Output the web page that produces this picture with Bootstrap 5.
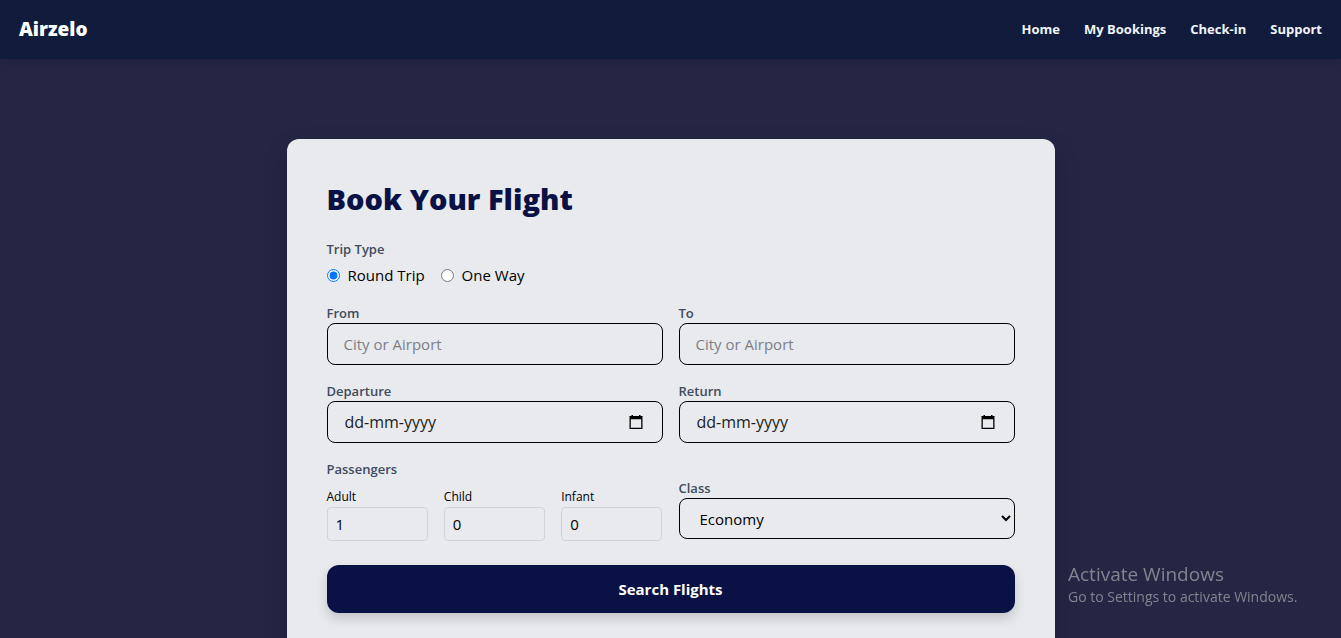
<!DOCTYPE html>
<html lang="en">
<head>
<meta charset="utf-8">
<meta name="viewport" content="width=device-width, initial-scale=1">
<title>Airzelo</title>
<link href="https://cdn.jsdelivr.net/npm/bootstrap@5.3.0/dist/css/bootstrap.min.css" rel="stylesheet">
<style>
  body { background: #242644; color: #000; font-family: "Segoe UI", "Open Sans", "Noto Sans", sans-serif; font-size: 15px; }
  .site-header { background: #111c3c; min-height: 59px; padding: 0 19px; box-shadow: 0 2px 10px rgba(0, 0, 0, .15); }
  .site-header .navbar-brand { color: #fff; font-size: 19px; font-weight: 800; }
  .site-header .nav-link { color: #f1f5f9; font-size: 13px; font-weight: 700; }
  .booking-wrap { padding: 80px 16px; }
  .booking { max-width: 768px; padding: 40px; background: #e8eaee; border-radius: 12px; box-shadow: 0 10px 24px rgba(0, 0, 0, .2); }
  .booking h1 { color: #0a1144; font-size: 29px; line-height: 40px; font-weight: 800; margin-bottom: 20px; }
  .field-label { display: block; color: #414b5d; font-size: 13px; line-height: 20px; font-weight: 600; margin: 0; }
  .count-label { display: block; font-size: 12px; line-height: 20px; }
  .trip-option { line-height: 24px; }
  .trip-option input { width: 13px; height: 13px; margin: 0; }
  .booking .form-control { color: #000; background: transparent; border: 1px solid #000; border-radius: 8px; height: 42px; padding: 8px 16px; font-size: 15px; line-height: 24px; }
  .booking .form-control::placeholder { color: #7d8087; }
  .booking .date-box { padding: 0 19px 0 17px; }
  .date-box input { background: transparent; border: 0; outline: 0; padding: 0; min-width: 0; font-size: 16px; line-height: 24px; }
  .date-box input::placeholder { color: #1c1d22; opacity: 1; }
  .date-box button { background: transparent; border: 0; padding: 0; }
  .booking .count-input { height: 34px; padding: 4px 8px; border-color: #d0d3d9; border-radius: 4px; }
  .class-field { padding-bottom: 2px; }
  .class-select { width: 100%; height: 41px; padding: 0 0 0 16px; color: #000; background: transparent; border: 1px solid #000; border-radius: 8px; }
  .booking .search-btn { height: 48px; margin-top: 24px; color: #fff; background: #0a1144; border: 0; border-radius: 12px; font-size: 15px; font-weight: 700; box-shadow: 0 6px 12px rgba(0, 0, 0, .16); }
  .os-notice { position: fixed; right: 37px; bottom: 31px; width: 236px; color: #83848f; pointer-events: none; font-size: 14px; line-height: 20px; }
  .os-notice strong { display: block; font-size: 19px; line-height: 26px; font-weight: 400; }
</style>
</head>
<body>
<header class="site-header navbar navbar-expand">
  <a class="navbar-brand p-0 m-0" href="#">Airzelo</a>
  <nav class="navbar-nav ms-auto gap-4">
    <a class="nav-link p-0" href="#">Home</a>
    <a class="nav-link p-0" href="#">My Bookings</a>
    <a class="nav-link p-0" href="#">Check-in</a>
    <a class="nav-link p-0" href="#">Support</a>
  </nav>
</header>
<main class="booking-wrap">
  <form class="booking mx-auto">
    <h1>Book Your Flight</h1>
    <fieldset class="mb-3">
      <legend class="field-label mb-1">Trip Type</legend>
      <div class="d-flex gap-3">
        <label class="trip-option d-flex align-items-center gap-2"><input type="radio" name="trip" checked>Round Trip</label>
        <label class="trip-option d-flex align-items-center gap-2"><input type="radio" name="trip">One Way</label>
      </div>
    </fieldset>
    <div class="row g-3">
      <div class="col-6">
        <label class="field-label" for="from">From</label>
        <input class="form-control" id="from" type="text" placeholder="City or Airport">
      </div>
      <div class="col-6">
        <label class="field-label" for="to">To</label>
        <input class="form-control" id="to" type="text" placeholder="City or Airport">
      </div>
      <div class="col-6">
        <label class="field-label" for="departure">Departure</label>
        <div class="form-control date-box d-flex align-items-center">
          <input class="flex-grow-1" id="departure" type="text" placeholder="dd-mm-yyyy">
          <button class="d-flex" type="button" aria-label="Pick departure date"><svg width="14" height="14" viewBox="0 0 14 14"><path fill-rule="evenodd" d="M2.500 0h1.500v1h6V0h1.500v1h2v13H.5V1h2zM1.800 4.300v8.400h10.400V4.300z"/></svg></button>
        </div>
      </div>
      <div class="col-6">
        <label class="field-label" for="return">Return</label>
        <div class="form-control date-box d-flex align-items-center">
          <input class="flex-grow-1" id="return" type="text" placeholder="dd-mm-yyyy">
          <button class="d-flex" type="button" aria-label="Pick return date"><svg width="14" height="14" viewBox="0 0 14 14"><path fill-rule="evenodd" d="M2.500 0h1.500v1h6V0h1.500v1h2v13H.5V1h2zM1.800 4.300v8.400h10.400V4.300z"/></svg></button>
        </div>
      </div>
      <fieldset class="col-6">
        <legend class="field-label mb-2">Passengers</legend>
        <div class="row gx-3">
          <div class="col-4">
            <label class="count-label" for="adult">Adult</label>
            <input class="form-control count-input" id="adult" type="number" min="1" value="1">
          </div>
          <div class="col-4">
            <label class="count-label" for="child">Child</label>
            <input class="form-control count-input" id="child" type="number" min="0" value="0">
          </div>
          <div class="col-4">
            <label class="count-label" for="infant">Infant</label>
            <input class="form-control count-input" id="infant" type="number" min="0" value="0">
          </div>
        </div>
      </fieldset>
      <div class="col-6 class-field align-self-end">
        <label class="field-label" for="cabin">Class</label>
        <select class="class-select" id="cabin">
          <option>Economy</option>
          <option>Business</option>
          <option>First</option>
        </select>
      </div>
    </div>
    <button class="btn search-btn w-100" type="submit">Search Flights</button>
  </form>
</main>
<aside class="os-notice"><strong>Activate Windows</strong>Go to Settings to activate Windows.</aside>
<script src="https://cdn.jsdelivr.net/npm/bootstrap@5.3.0/dist/js/bootstrap.bundle.min.js"></script>
</body>
</html>
